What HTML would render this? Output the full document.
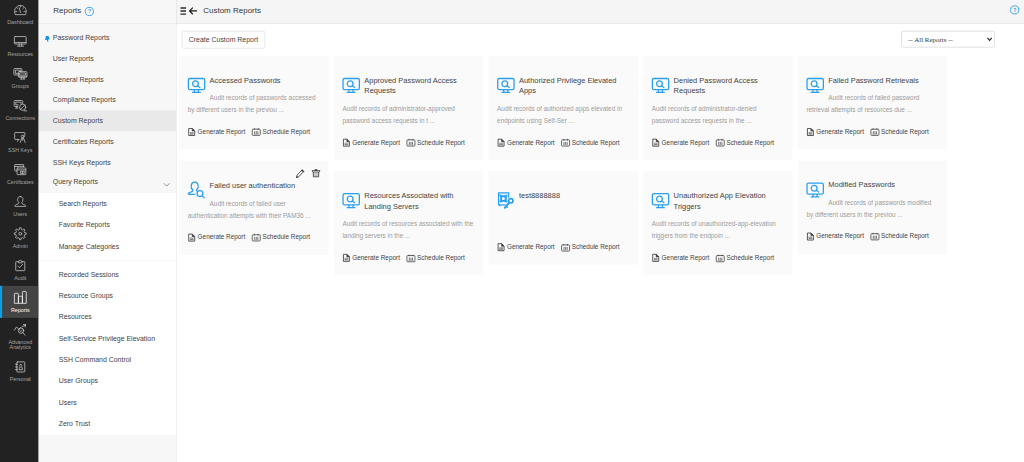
<!DOCTYPE html>
<html lang="en">
<head>
<meta charset="utf-8">
<title>Custom Reports</title>
<style>
*{box-sizing:border-box;margin:0;padding:0}
html,body{width:1024px;height:462px;overflow:hidden;background:#fff}
body{font-family:"Liberation Sans",Arial,sans-serif;color:#333}
#app{position:absolute;left:0;top:0;width:1920px;height:867px;transform:scale(0.533333);transform-origin:0 0;overflow:hidden;background:#fff}
#nav{position:absolute;left:0;top:0;width:72px;height:867px;background:#222;overflow:hidden}
#nav .it{position:absolute;left:0;width:72px;height:60px;text-align:center;color:#a2a2a2;font-size:10px}
#nav .it svg{position:absolute;left:24px;top:10px;width:28px;height:24px;fill:none;stroke:#cdcdcd;stroke-width:1.4;stroke-linecap:round;stroke-linejoin:round;overflow:visible}
#nav .it span{position:absolute;left:2px;width:72px;top:41px;line-height:9px;white-space:nowrap}
#nav .it.on{background:#444;color:#fff}
#nav .it.on i{position:absolute;left:0;top:0;width:4px;height:60px;background:#0aa0e8}
#nav .it.on svg{stroke:#fff}
#side{position:absolute;left:72px;top:0;width:259px;height:867px;background:#f7f7f7;border-right:1px solid #e9e9e9}
#side .hd{position:absolute;left:0;top:0;width:259px;height:45px;border-bottom:1px solid #e4e4e4;border-right:1px solid #dedede;background:#f7f7f7}
#side .hd b{position:absolute;left:28px;top:11px;font-weight:normal;font-size:15px;line-height:17px;color:#363636}
#side .top{position:absolute;left:0;top:45px;width:258px;height:317px;background:#f7f7f7}
.help{position:absolute;width:17px;height:17px;overflow:visible}
#side .m{position:absolute;left:0;width:258px;height:39px;line-height:39px;font-size:13px;color:#434343;padding-left:27px;white-space:nowrap}
#side .m.act{background:#e9e9e9}
#side .sub{position:absolute;left:0;top:362px;width:258px;height:453px;background:#fff}
#side .s{position:absolute;left:0;width:258px;height:40px;line-height:40px;font-size:13px;color:#434343;padding-left:38px;white-space:nowrap}
#side .sep{position:absolute;left:0;top:126px;width:258px;height:1px;background:#e8eef0}
#main{position:absolute;left:331px;top:0;width:1589px;height:867px;background:#fff}
#main .hd{position:absolute;left:0;top:0;width:1589px;height:45px;background:#f5f5f5;border-bottom:1px solid #e2e2e2}
#main .hd .t{position:absolute;left:50px;top:11px;font-size:15px;line-height:17px;color:#363636;white-space:nowrap}
#main .hd svg{position:absolute}
.btn{position:absolute;left:10px;top:58px;width:156px;height:33px;border:1px solid #d3d3d3;border-radius:3px;background:#fff;font-size:13px;line-height:31px;text-align:center;color:#434343;white-space:nowrap}
.sel{position:absolute;left:1359px;top:58px;width:175px;height:31px;border:1px solid #c6c6c6;border-radius:4px;background:#fff;font-family:"Liberation Serif","Times New Roman",serif;font-size:13px;line-height:29px;color:#333;padding-left:12px;white-space:nowrap}
.sel svg{position:absolute;right:3.500px;top:10px;width:11px;height:9px}
.card{position:absolute;width:280px;background:#fafafa;padding:37px 16px 0 16px}
.card .ic{float:left;width:33px;height:29px;margin:4px 8px 0 0;overflow:visible}
.card h3{position:relative;top:-1.5px;font-weight:normal;font-size:14px;line-height:20px;color:#434343;margin-left:41px}
.card p{font-size:12px;line-height:22px;color:#9b9b9b;margin-top:11px}
.card .lk{position:absolute;left:16px;bottom:22px;width:250px;height:22px;line-height:22px;font-size:12px;color:#434343;white-space:nowrap}
.card .lk span{position:absolute;top:0}
.card .lk svg{position:absolute;overflow:visible}
.card .ed{position:absolute;overflow:visible}
</style>
</head>
<body>
<div id="app">
<div id="main">
<div class="hd"><svg style="left:7px;top:13px;width:11px;height:15px" viewBox="0 0 11 15"><path d="M0 2h11M0 7.800h11M0 13.500h11" stroke="#2b2b2b" stroke-width="2.700"/></svg><svg style="left:23px;top:13px;width:16px;height:15px" viewBox="0 0 16 15"><path d="M7.500 1.200L1.500 7.500l6 6.300M1.500 7.500h14" fill="none" stroke="#1a1a1a" stroke-width="2.300" stroke-linejoin="miter"/></svg><div class="t">Custom Reports</div><svg class="help" style="left:1563px;top:10px" viewBox="0 0 17 17"><circle cx="8.500" cy="8.500" r="7.700" fill="none" stroke="#3ea0ea" stroke-width="1.800"/><text x="8.700" y="11.800" text-anchor="middle" font-family="Liberation Sans,Arial,sans-serif" font-size="9.500" font-weight="bold" fill="#2d98e6">?</text></svg></div>
<div class="btn">Create Custom Report</div>
<div class="sel">-- All Reports --<svg viewBox="0 0 11 9"><path d="M1.500 2l4 4.500 4-4.500" fill="none" stroke="#222" stroke-width="2.200"/></svg></div>
<div class="card" style="left:5px;top:104.6px;height:175px"><svg class="ic" viewBox="0 0 33 29"><g fill="none" stroke="#2a9ff0" stroke-width="2.400" stroke-linecap="round" stroke-linejoin="round"><rect x="1.200" y="1.200" width="30.600" height="20.800" rx="3"/><circle cx="14.500" cy="11" r="5.400"/><path d="M18.600 14.800l4.200 3.200M12.500 22.500v4.500M20 22.500v4.500M9 27.300h14.500"/></g></svg><h3>Accessed Passwords</h3><p>Audit records of passwords accessed by different users in the previou ...</p><div class="lk"><svg style="left:1px;top:4px;width:13px;height:15px" viewBox="0 0 13 15"><path d="M.9.900h6.600l4.600 4.600v8.600H.9z" fill="#fff" stroke="#3c3c3c" stroke-width="1.600" stroke-linejoin="round"/><path d="M7.300.900v4.800h4.800z" fill="#444" stroke="#333" stroke-width="1" stroke-linejoin="round"/><path d="M3 7.500h7v5H3z" fill="#858585"/><path d="M3 9.200h7" stroke="#ddd" stroke-width=".8"/></svg><span style="left:18.500px">Generate Report</span><svg style="left:120px;top:4.500px;width:17px;height:15px" viewBox="0 0 17 15"><rect x="1" y="2.200" width="15" height="11.600" rx="1.600" fill="#fff" stroke="#4a4a4a" stroke-width="1.600"/><path d="M5 .5v3M12 .5v3" stroke="#444" stroke-width="1.500"/><path d="M5.500 6v5.500M8.500 6v5.500M11.500 6v5.500" stroke="#5a5a5a" stroke-width="1.600" fill="none"/><path d="M3.500 11.800h10" stroke="#999" stroke-width="1.200"/></svg><span style="left:140px">Schedule Report</span></div></div>
<div class="card" style="left:295px;top:104.6px;height:195px"><svg class="ic" viewBox="0 0 33 29"><g fill="none" stroke="#2a9ff0" stroke-width="2.400" stroke-linecap="round" stroke-linejoin="round"><rect x="1.200" y="1.200" width="30.600" height="20.800" rx="3"/><circle cx="14.500" cy="11" r="5.400"/><path d="M18.600 14.800l4.200 3.200M12.500 22.500v4.500M20 22.500v4.500M9 27.300h14.500"/></g></svg><h3>Approved Password Access Requests</h3><p>Audit records of administrator-approved password access requests in t ...</p><div class="lk"><svg style="left:1px;top:4px;width:13px;height:15px" viewBox="0 0 13 15"><path d="M.9.900h6.600l4.600 4.600v8.600H.9z" fill="#fff" stroke="#3c3c3c" stroke-width="1.600" stroke-linejoin="round"/><path d="M7.300.900v4.800h4.800z" fill="#444" stroke="#333" stroke-width="1" stroke-linejoin="round"/><path d="M3 7.500h7v5H3z" fill="#858585"/><path d="M3 9.200h7" stroke="#ddd" stroke-width=".8"/></svg><span style="left:18.500px">Generate Report</span><svg style="left:120px;top:4.500px;width:17px;height:15px" viewBox="0 0 17 15"><rect x="1" y="2.200" width="15" height="11.600" rx="1.600" fill="#fff" stroke="#4a4a4a" stroke-width="1.600"/><path d="M5 .5v3M12 .5v3" stroke="#444" stroke-width="1.500"/><path d="M5.500 6v5.500M8.500 6v5.500M11.500 6v5.500" stroke="#5a5a5a" stroke-width="1.600" fill="none"/><path d="M3.500 11.800h10" stroke="#999" stroke-width="1.200"/></svg><span style="left:140px">Schedule Report</span></div></div>
<div class="card" style="left:585px;top:104.6px;height:195px"><svg class="ic" viewBox="0 0 33 29"><g fill="none" stroke="#2a9ff0" stroke-width="2.400" stroke-linecap="round" stroke-linejoin="round"><rect x="1.200" y="1.200" width="30.600" height="20.800" rx="3"/><circle cx="14.500" cy="11" r="5.400"/><path d="M18.600 14.800l4.200 3.200M12.500 22.500v4.500M20 22.500v4.500M9 27.300h14.500"/></g></svg><h3>Authorized Privilege Elevated Apps</h3><p>Audit records of authorized apps elevated in endpoints using Self-Ser ...</p><div class="lk"><svg style="left:1px;top:4px;width:13px;height:15px" viewBox="0 0 13 15"><path d="M.9.900h6.600l4.600 4.600v8.600H.9z" fill="#fff" stroke="#3c3c3c" stroke-width="1.600" stroke-linejoin="round"/><path d="M7.300.900v4.800h4.800z" fill="#444" stroke="#333" stroke-width="1" stroke-linejoin="round"/><path d="M3 7.500h7v5H3z" fill="#858585"/><path d="M3 9.200h7" stroke="#ddd" stroke-width=".8"/></svg><span style="left:18.500px">Generate Report</span><svg style="left:120px;top:4.500px;width:17px;height:15px" viewBox="0 0 17 15"><rect x="1" y="2.200" width="15" height="11.600" rx="1.600" fill="#fff" stroke="#4a4a4a" stroke-width="1.600"/><path d="M5 .5v3M12 .5v3" stroke="#444" stroke-width="1.500"/><path d="M5.500 6v5.500M8.500 6v5.500M11.500 6v5.500" stroke="#5a5a5a" stroke-width="1.600" fill="none"/><path d="M3.500 11.800h10" stroke="#999" stroke-width="1.200"/></svg><span style="left:140px">Schedule Report</span></div></div>
<div class="card" style="left:875px;top:104.6px;height:195px"><svg class="ic" viewBox="0 0 33 29"><g fill="none" stroke="#2a9ff0" stroke-width="2.400" stroke-linecap="round" stroke-linejoin="round"><rect x="1.200" y="1.200" width="30.600" height="20.800" rx="3"/><circle cx="14.500" cy="11" r="5.400"/><path d="M18.600 14.800l4.200 3.200M12.500 22.500v4.500M20 22.500v4.500M9 27.300h14.500"/></g></svg><h3>Denied Password Access Requests</h3><p>Audit records of administrator-denied password access requests in the ...</p><div class="lk"><svg style="left:1px;top:4px;width:13px;height:15px" viewBox="0 0 13 15"><path d="M.9.900h6.600l4.600 4.600v8.600H.9z" fill="#fff" stroke="#3c3c3c" stroke-width="1.600" stroke-linejoin="round"/><path d="M7.300.900v4.800h4.800z" fill="#444" stroke="#333" stroke-width="1" stroke-linejoin="round"/><path d="M3 7.500h7v5H3z" fill="#858585"/><path d="M3 9.200h7" stroke="#ddd" stroke-width=".8"/></svg><span style="left:18.500px">Generate Report</span><svg style="left:120px;top:4.500px;width:17px;height:15px" viewBox="0 0 17 15"><rect x="1" y="2.200" width="15" height="11.600" rx="1.600" fill="#fff" stroke="#4a4a4a" stroke-width="1.600"/><path d="M5 .5v3M12 .5v3" stroke="#444" stroke-width="1.500"/><path d="M5.500 6v5.500M8.500 6v5.500M11.500 6v5.500" stroke="#5a5a5a" stroke-width="1.600" fill="none"/><path d="M3.500 11.800h10" stroke="#999" stroke-width="1.200"/></svg><span style="left:140px">Schedule Report</span></div></div>
<div class="card" style="left:1165px;top:104.6px;height:175px"><svg class="ic" viewBox="0 0 33 29"><g fill="none" stroke="#2a9ff0" stroke-width="2.400" stroke-linecap="round" stroke-linejoin="round"><rect x="1.200" y="1.200" width="30.600" height="20.800" rx="3"/><circle cx="14.500" cy="11" r="5.400"/><path d="M18.600 14.800l4.200 3.200M12.500 22.500v4.500M20 22.500v4.500M9 27.300h14.500"/></g></svg><h3>Failed Password Retrievals</h3><p>Audit records of failed password retrieval attempts of resources due ...</p><div class="lk"><svg style="left:1px;top:4px;width:13px;height:15px" viewBox="0 0 13 15"><path d="M.9.900h6.600l4.600 4.600v8.600H.9z" fill="#fff" stroke="#3c3c3c" stroke-width="1.600" stroke-linejoin="round"/><path d="M7.300.900v4.800h4.800z" fill="#444" stroke="#333" stroke-width="1" stroke-linejoin="round"/><path d="M3 7.500h7v5H3z" fill="#858585"/><path d="M3 9.200h7" stroke="#ddd" stroke-width=".8"/></svg><span style="left:18.500px">Generate Report</span><svg style="left:120px;top:4.500px;width:17px;height:15px" viewBox="0 0 17 15"><rect x="1" y="2.200" width="15" height="11.600" rx="1.600" fill="#fff" stroke="#4a4a4a" stroke-width="1.600"/><path d="M5 .5v3M12 .5v3" stroke="#444" stroke-width="1.500"/><path d="M5.500 6v5.500M8.500 6v5.500M11.500 6v5.500" stroke="#5a5a5a" stroke-width="1.600" fill="none"/><path d="M3.500 11.800h10" stroke="#999" stroke-width="1.200"/></svg><span style="left:140px">Schedule Report</span></div></div>
<div class="card" style="left:5px;top:300.6px;height:177px;padding-top:39px"><svg class="ed" style="left:219px;top:16.500px;width:16px;height:17px" viewBox="0 0 16 17"><path d="M11.500 1.500l3 3L5 14.500l-4 1.500 1-4.500z" fill="#fff" stroke="#3a3a3a" stroke-width="1.700" stroke-linejoin="round"/><path d="M10.300 2.700l3 3 1.200-1.200-3-3z" fill="#333" stroke="#333" stroke-width="1"/><path d="M1.200 15.800l1.800-.6-1.300-1.300z" fill="#333" stroke="#333"/></svg><svg class="ed" style="left:248px;top:16.500px;width:17px;height:16px" viewBox="0 0 17 16"><path d="M3.500 5.500v9h10v-9" fill="#e4e4e4" stroke="#3a3a3a" stroke-width="1.600"/><path d="M6.500 7v6.500M8.500 7v6.500M10.500 7v6.500" stroke="#9a9a9a" stroke-width="1"/><path d="M1 2.800h15l-1.300 2.700h-12.400z" fill="#fff" stroke="#3a3a3a" stroke-width="1.400" stroke-linejoin="round"/><ellipse cx="8.500" cy="1.800" rx="3.200" ry="1.300" fill="#222"/></svg><svg class="ic" viewBox="0 0 33 29" style="margin-top:-2px;margin-bottom:3px;height:33px"><g fill="none" stroke="#2a9ff0" stroke-width="2.400" stroke-linecap="round" stroke-linejoin="round"><path d="M13 24.500H2.500c-1.500 0-1.800-1.800-.5-2.500l7-3.500c1-.5 1-1.500.3-2.300C7.500 14.200 6.500 12 6.500 9.500 6.500 4.500 9 1.500 13 1.500s6.500 3 6.500 8c0 2.500-1 4.700-2.800 6.700-.5.600-.4 1.300.3 1.800"/><circle cx="23" cy="23" r="5.500"/><path d="M27 27l4 4"/></g></svg><h3>Failed user authentication</h3><p>Audit records of failed user authentication attempts with their PAM36 ...</p><div class="lk"><svg style="left:1px;top:4px;width:13px;height:15px" viewBox="0 0 13 15"><path d="M.9.900h6.600l4.600 4.600v8.600H.9z" fill="#fff" stroke="#3c3c3c" stroke-width="1.600" stroke-linejoin="round"/><path d="M7.300.900v4.800h4.800z" fill="#444" stroke="#333" stroke-width="1" stroke-linejoin="round"/><path d="M3 7.500h7v5H3z" fill="#858585"/><path d="M3 9.200h7" stroke="#ddd" stroke-width=".8"/></svg><span style="left:18.500px">Generate Report</span><svg style="left:120px;top:4.500px;width:17px;height:15px" viewBox="0 0 17 15"><rect x="1" y="2.200" width="15" height="11.600" rx="1.600" fill="#fff" stroke="#4a4a4a" stroke-width="1.600"/><path d="M5 .5v3M12 .5v3" stroke="#444" stroke-width="1.500"/><path d="M5.500 6v5.500M8.500 6v5.500M11.500 6v5.500" stroke="#5a5a5a" stroke-width="1.600" fill="none"/><path d="M3.500 11.800h10" stroke="#999" stroke-width="1.200"/></svg><span style="left:140px">Schedule Report</span></div></div>
<div class="card" style="left:295px;top:321px;height:195px"><svg class="ic" viewBox="0 0 33 29"><g fill="none" stroke="#2a9ff0" stroke-width="2.400" stroke-linecap="round" stroke-linejoin="round"><rect x="1.200" y="1.200" width="30.600" height="20.800" rx="3"/><circle cx="14.500" cy="11" r="5.400"/><path d="M18.600 14.800l4.200 3.200M12.500 22.500v4.500M20 22.500v4.500M9 27.300h14.500"/></g></svg><h3>Resources Associated with Landing Servers</h3><p>Audit records of resources associated with the landing servers in the ...</p><div class="lk"><svg style="left:1px;top:4px;width:13px;height:15px" viewBox="0 0 13 15"><path d="M.9.900h6.600l4.600 4.600v8.600H.9z" fill="#fff" stroke="#3c3c3c" stroke-width="1.600" stroke-linejoin="round"/><path d="M7.300.900v4.800h4.800z" fill="#444" stroke="#333" stroke-width="1" stroke-linejoin="round"/><path d="M3 7.500h7v5H3z" fill="#858585"/><path d="M3 9.200h7" stroke="#ddd" stroke-width=".8"/></svg><span style="left:18.500px">Generate Report</span><svg style="left:120px;top:4.500px;width:17px;height:15px" viewBox="0 0 17 15"><rect x="1" y="2.200" width="15" height="11.600" rx="1.600" fill="#fff" stroke="#4a4a4a" stroke-width="1.600"/><path d="M5 .5v3M12 .5v3" stroke="#444" stroke-width="1.500"/><path d="M5.500 6v5.500M8.500 6v5.500M11.500 6v5.500" stroke="#5a5a5a" stroke-width="1.600" fill="none"/><path d="M3.500 11.800h10" stroke="#999" stroke-width="1.200"/></svg><span style="left:140px">Schedule Report</span></div></div>
<div class="card" style="left:585px;top:321px;height:175px"><svg class="ic" viewBox="0 0 33 33" style="margin-top:0;height:33px"><g fill="none" stroke="#2a9ff0" stroke-width="2.300" stroke-linecap="round" stroke-linejoin="round"><path d="M21.800 12V3.500H2.800v22.500h12.500"/><path d="M5 26.500v1.500"/><path d="M5.300 7.500Q11.700 10.300 18.800 7.500Q16 14.300 18.800 21Q11.700 18.300 5.300 21Q8 14.300 5.300 7.500z" fill="#2a9ff0" stroke-width="1.500"/><circle cx="11.900" cy="14.300" r="2.900" fill="#fafafa" stroke="none"/><circle cx="25.800" cy="18.500" r="4.100" stroke-width="3.200"/><path d="M22.500 22.300L14.800 31.500" stroke-width="3.800"/><path d="M17.500 29l2 1.800" stroke-width="2"/></g></svg><h3>test8888888</h3><p></p><div class="lk"><svg style="left:1px;top:4px;width:13px;height:15px" viewBox="0 0 13 15"><path d="M.9.900h6.600l4.600 4.600v8.600H.9z" fill="#fff" stroke="#3c3c3c" stroke-width="1.600" stroke-linejoin="round"/><path d="M7.300.900v4.800h4.800z" fill="#444" stroke="#333" stroke-width="1" stroke-linejoin="round"/><path d="M3 7.500h7v5H3z" fill="#858585"/><path d="M3 9.200h7" stroke="#ddd" stroke-width=".8"/></svg><span style="left:18.500px">Generate Report</span><svg style="left:120px;top:4.500px;width:17px;height:15px" viewBox="0 0 17 15"><rect x="1" y="2.200" width="15" height="11.600" rx="1.600" fill="#fff" stroke="#4a4a4a" stroke-width="1.600"/><path d="M5 .5v3M12 .5v3" stroke="#444" stroke-width="1.500"/><path d="M5.500 6v5.500M8.500 6v5.500M11.500 6v5.500" stroke="#5a5a5a" stroke-width="1.600" fill="none"/><path d="M3.500 11.800h10" stroke="#999" stroke-width="1.200"/></svg><span style="left:140px">Schedule Report</span></div></div>
<div class="card" style="left:875px;top:321px;height:195px"><svg class="ic" viewBox="0 0 33 29"><g fill="none" stroke="#2a9ff0" stroke-width="2.400" stroke-linecap="round" stroke-linejoin="round"><rect x="1.200" y="1.200" width="30.600" height="20.800" rx="3"/><circle cx="14.500" cy="11" r="5.400"/><path d="M18.600 14.800l4.200 3.200M12.500 22.500v4.500M20 22.500v4.500M9 27.300h14.500"/></g></svg><h3>Unauthorized App Elevation Triggers</h3><p>Audit records of unauthorized-app-elevation triggers from the endpoin ...</p><div class="lk"><svg style="left:1px;top:4px;width:13px;height:15px" viewBox="0 0 13 15"><path d="M.9.900h6.600l4.600 4.600v8.600H.9z" fill="#fff" stroke="#3c3c3c" stroke-width="1.600" stroke-linejoin="round"/><path d="M7.300.900v4.800h4.800z" fill="#444" stroke="#333" stroke-width="1" stroke-linejoin="round"/><path d="M3 7.500h7v5H3z" fill="#858585"/><path d="M3 9.200h7" stroke="#ddd" stroke-width=".8"/></svg><span style="left:18.500px">Generate Report</span><svg style="left:120px;top:4.500px;width:17px;height:15px" viewBox="0 0 17 15"><rect x="1" y="2.200" width="15" height="11.600" rx="1.600" fill="#fff" stroke="#4a4a4a" stroke-width="1.600"/><path d="M5 .5v3M12 .5v3" stroke="#444" stroke-width="1.500"/><path d="M5.500 6v5.500M8.500 6v5.500M11.500 6v5.500" stroke="#5a5a5a" stroke-width="1.600" fill="none"/><path d="M3.500 11.800h10" stroke="#999" stroke-width="1.200"/></svg><span style="left:140px">Schedule Report</span></div></div>
<div class="card" style="left:1165px;top:300.6px;height:175px"><svg class="ic" viewBox="0 0 33 29"><g fill="none" stroke="#2a9ff0" stroke-width="2.400" stroke-linecap="round" stroke-linejoin="round"><rect x="1.200" y="1.200" width="30.600" height="20.800" rx="3"/><circle cx="14.500" cy="11" r="5.400"/><path d="M18.600 14.800l4.200 3.200M12.500 22.500v4.500M20 22.500v4.500M9 27.300h14.500"/></g></svg><h3>Modified Passwords</h3><p>Audit records of passwords modified by different users in the previou ...</p><div class="lk"><svg style="left:1px;top:4px;width:13px;height:15px" viewBox="0 0 13 15"><path d="M.9.900h6.600l4.600 4.600v8.600H.9z" fill="#fff" stroke="#3c3c3c" stroke-width="1.600" stroke-linejoin="round"/><path d="M7.300.900v4.800h4.800z" fill="#444" stroke="#333" stroke-width="1" stroke-linejoin="round"/><path d="M3 7.500h7v5H3z" fill="#858585"/><path d="M3 9.200h7" stroke="#ddd" stroke-width=".8"/></svg><span style="left:18.500px">Generate Report</span><svg style="left:120px;top:4.500px;width:17px;height:15px" viewBox="0 0 17 15"><rect x="1" y="2.200" width="15" height="11.600" rx="1.600" fill="#fff" stroke="#4a4a4a" stroke-width="1.600"/><path d="M5 .5v3M12 .5v3" stroke="#444" stroke-width="1.500"/><path d="M5.500 6v5.500M8.500 6v5.500M11.500 6v5.500" stroke="#5a5a5a" stroke-width="1.600" fill="none"/><path d="M3.500 11.800h10" stroke="#999" stroke-width="1.200"/></svg><span style="left:140px">Schedule Report</span></div></div>
</div>
<div id="side">
<div class="top"></div>
<div class="hd"><b>Reports</b><svg class="help" style="left:87px;top:12.500px" viewBox="0 0 17 17"><circle cx="8.500" cy="8.500" r="7.700" fill="none" stroke="#3ea0ea" stroke-width="1.800"/><text x="8.700" y="11.800" text-anchor="middle" font-family="Liberation Sans,Arial,sans-serif" font-size="9.500" font-weight="bold" fill="#2d98e6">?</text></svg></div>
<div class="m" style="top:50.5px">Password Reports</div>
<div class="m" style="top:89.5px">User Reports</div>
<div class="m" style="top:128.5px">General Reports</div>
<div class="m" style="top:167.5px">Compliance Reports</div>
<div class="m act" style="top:206.5px">Custom Reports</div>
<div class="m" style="top:245.5px">Certificates Reports</div>
<div class="m" style="top:284.5px">SSH Keys Reports</div>
<div class="m" style="top:323.5px;line-height:34px">Query Reports</div>
<svg style="position:absolute;left:12.300px;top:66.800px;width:9.400px;height:12.200px" viewBox="0 0 10 13"><path d="M1.500.3L8 1l.3 2.700 1.500 2.200-1.300 1.700-2.200-.3 1 5.400-1.300.3-2-5.200-3 .7-.7-1.500 1.700-2.500z" fill="#0c8fe8"/></svg>
<svg style="position:absolute;left:234px;top:342px;width:13px;height:9px" viewBox="0 0 13 9"><path d="M1 1.500l5.500 5.500 5.500-5.500" fill="none" stroke="#777" stroke-width="1.500"/></svg>
<div class="sub">
<div class="s" style="top:0px">Search Reports</div>
<div class="s" style="top:40px">Favorite Reports</div>
<div class="s" style="top:80px">Manage Categories</div>
<div class="sep"></div>
<div class="s" style="top:133.3px">Recorded Sessions</div>
<div class="s" style="top:173.3px">Resource Groups</div>
<div class="s" style="top:213.3px">Resources</div>
<div class="s" style="top:253.3px">Self-Service Privilege Elevation</div>
<div class="s" style="top:293.3px">SSH Command Control</div>
<div class="s" style="top:333.3px">User Groups</div>
<div class="s" style="top:373.3px">Users</div>
<div class="s" style="top:413.3px">Zero Trust</div>
</div>
</div>
<div id="nav">
<div class="it" style="top:-4px"><svg viewBox="0 0 28 24"><path d="M4.5 20.8A11.200 11.200 0 1 1 24.100 20.800z"/><path d="M14.500 17.500l-2.500-9M5 15.500h2.500M21 15.500h2.500M7.500 8.500l1.500 1.500M20.500 8.500l-1.500 1.500M14.300 5v2"/></svg><span>Dashboard</span></div>
<div class="it" style="top:56px"><svg viewBox="0 0 28 24"><rect x="3" y="2.500" width="22" height="14" rx="1.500"/><path d="M3.500 13.800h21M12 16.500v3.500M16.500 16.500v3.500M8.500 20.500h11.500"/></svg><span>Resources</span></div>
<div class="it" style="top:116px"><svg viewBox="0 0 28 24"><path d="M10 14.500H3.500a1.500 1.500 0 0 1-1.500-1.500V4a1.500 1.500 0 0 1 1.500-1.500h12a1.500 1.500 0 0 1 1.500 1.500v4"/><path d="M10 11.500H5v-6h9.500v2.500"/><rect x="10.500" y="8.300" width="16" height="10.600" rx="1.500"/><path d="M13 10.800h11v4h-11zM11 17h15M16 19v3M21 19v3M14.500 22.200h8"/></svg><span>Groups</span></div>
<div class="it" style="top:176px"><svg viewBox="0 0 28 24"><path d="M9.500 13.500H4a1.500 1.500 0 0 1-1.500-1.500V4a1.500 1.500 0 0 1 1.500-1.500h13a1.500 1.500 0 0 1 1.500 1.500v4"/><path d="M10 10.500H5.500v-5h10v2.500M5 16.500h5M7.500 13.500v3"/><circle cx="18.500" cy="15" r="5.800"/><path d="M14.500 19l8-8M21 21.800h5"/></svg><span>Connections</span></div>
<div class="it" style="top:236px"><svg viewBox="0 0 28 24"><path d="M12 15.5H4.5a1 1 0 0 1-1-1V3.5a1 1 0 0 1 1-1h17a1 1 0 0 1 1 1V8"/><path d="M9 19l1.5-3.5"/><circle cx="18.5" cy="10" r="2.6"/><path d="M17 12.5l-3 8.5M20 12.5l3 8.5M18.5 13v4"/></svg><span>SSH Keys</span></div>
<div class="it" style="top:296px"><svg viewBox="0 0 28 24"><path d="M8 14.5H4.5a1 1 0 0 1-1-1V3.5a1 1 0 0 1 1-1h15a1 1 0 0 1 1 1V7"/><path d="M3.5 6h17"/><rect x="8" y="9" width="16.5" height="12.5" rx="1"/><path d="M8 12.5h16.5M15 15h6.5v4H15zM18 15v4"/></svg><span>Certificates</span></div>
<div class="it" style="top:356px"><svg viewBox="0 0 28 24"><path d="M14 2.5c3.2 0 5 2.300 5 5.500s-1.300 5-2.500 6c0 1.500 1 2 3.500 3s4 1.500 4 4H4c0-2.500 1.500-3 4-4s3.500-1.500 3.500-3C10.300 13 9 11.200 9 8s1.800-5.500 5-5.500z"/></svg><span>Users</span></div>
<div class="it" style="top:416px"><svg viewBox="0 0 28 24"><circle cx="14" cy="12.200" r="2.600"/><path d="M12.03 4.14 L12.55 1.09 L15.45 1.09 L15.97 4.14 L18.31 5.10 L20.83 3.32 L22.88 5.37 L21.10 7.89 L22.06 10.23 L25.11 10.75 L25.11 13.65 L22.06 14.17 L21.10 16.51 L22.88 19.03 L20.83 21.08 L18.31 19.30 L15.97 20.26 L15.45 23.31 L12.55 23.31 L12.03 20.26 L9.69 19.30 L7.17 21.08 L5.12 19.03 L6.90 16.51 L5.94 14.17 L2.89 13.65 L2.89 10.75 L5.94 10.23 L6.90 7.89 L5.12 5.37 L7.17 3.32 L9.69 5.10z"/></svg><span>Admin</span></div>
<div class="it" style="top:476px"><svg viewBox="0 0 28 24"><path d="M10.500 4.500H6.500a1 1 0 0 0-1 1v15a1 1 0 0 0 1 1h15a1 1 0 0 0 1-1v-15a1 1 0 0 0-1-1h-4"/><path d="M10.500 6V4l3.500-2 3.500 2v2z"/><path d="M9.500 13l3 3 6-6.500"/></svg><span>Audit</span></div>
<div class="it on" style="top:536px"><i></i><svg viewBox="0 0 28 24"><path d="M3 22V5.500a1.500 1.500 0 0 1 1.500-1.500h4.500a1.500 1.500 0 0 1 1.500 1.500V22zM10.500 22V11a1.500 1.500 0 0 1 1.500-1.500h4.500a1.500 1.500 0 0 1 1.500 1.500v11zM18 22V2a1.500 1.500 0 0 1 1.500-1.500h4.300a1.500 1.500 0 0 1 1.500 1.500v20z"/></svg><span>Reports</span></div>
<div class="it" style="top:596px"><svg viewBox="0 0 28 24"><path d="M3 13l4-6 4.500 5 4-4.500"/><circle cx="15.500" cy="14" r="5"/><path d="M19 18l4 4.500M18 6.500l6-3.500M24 3l-1 4M24 3l-4-.5M13.500 14l1.500 1.500 3-3"/></svg><span>Advanced<br>Analytics</span></div>
<div class="it" style="top:666px"><svg viewBox="0 0 28 24"><rect x="7.500" y="2.500" width="15" height="19" rx="1.500"/><path d="M5 7h4M5 12h4M5 17h4M12 16.500v-2.500c0-1 1-1.500 3-1.500s3 .5 3 1.500v2.500zM13.200 10.500v-1.500a1.800 1.800 0 0 1 3.600 0v1.500"/></svg><span>Personal</span></div>
</div>
</div>
</body>
</html>
